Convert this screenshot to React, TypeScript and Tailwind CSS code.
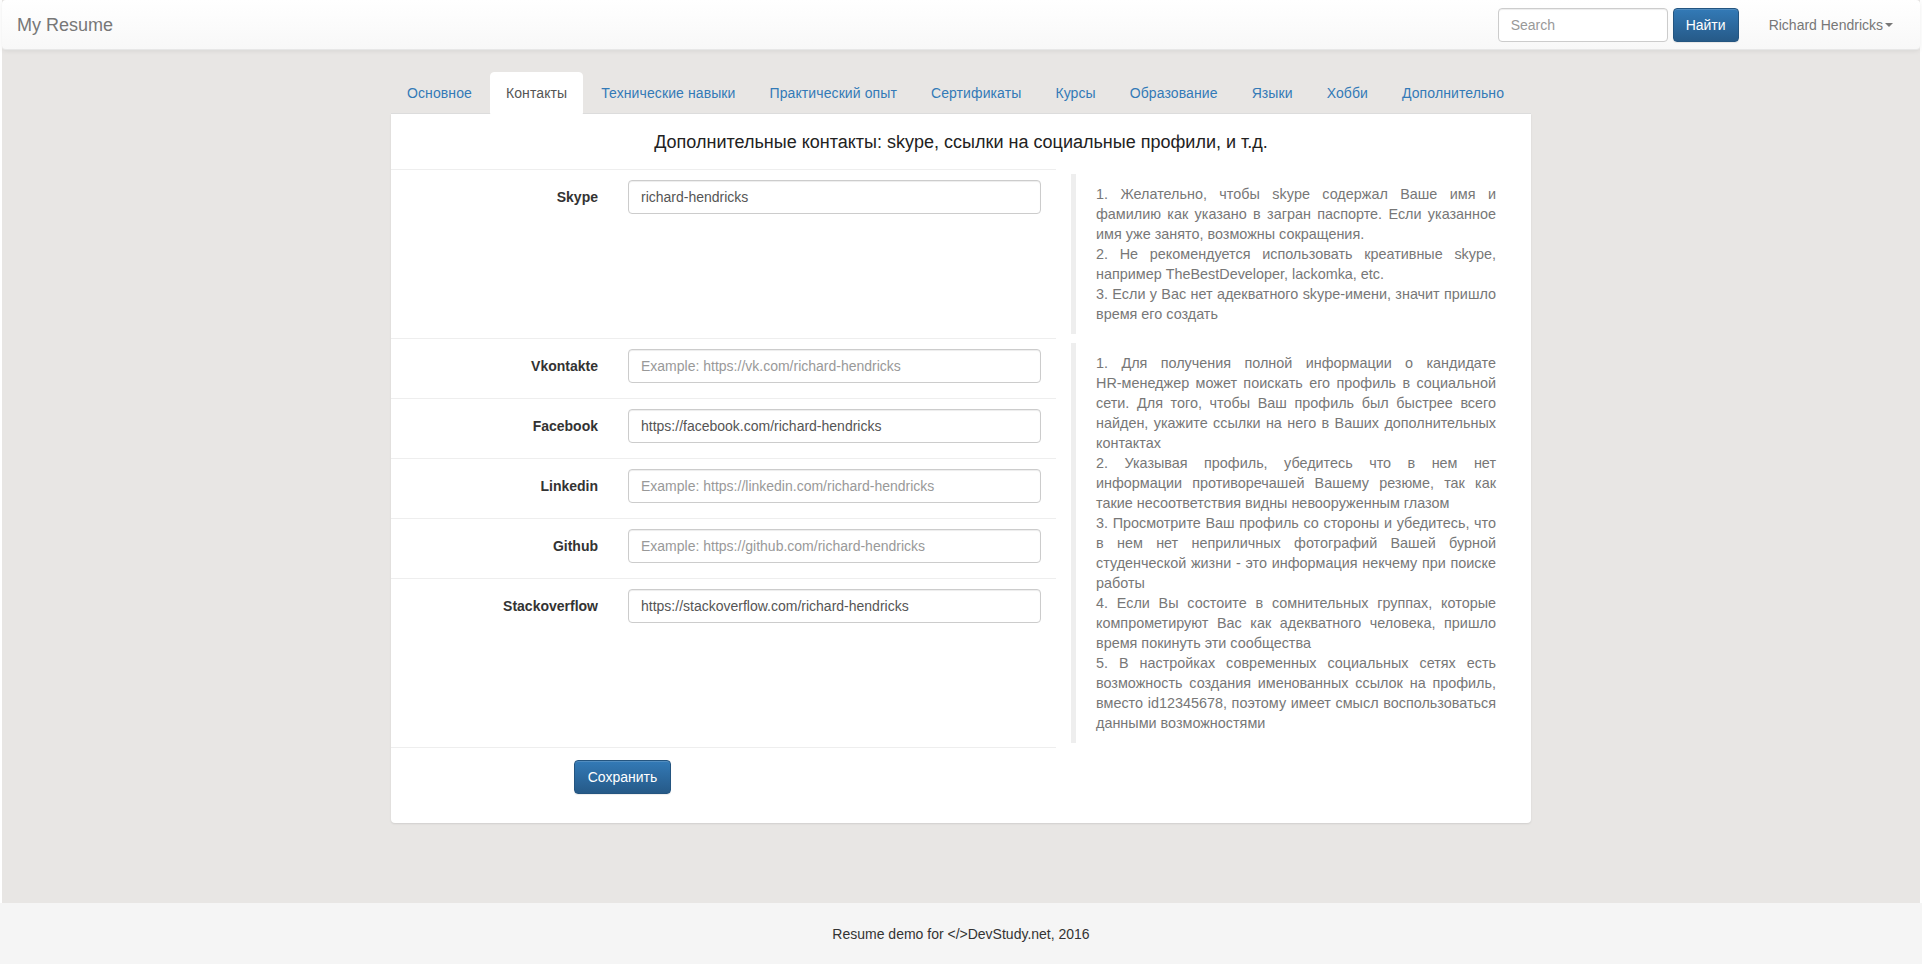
import React from 'react';

const tabs = [
  'Основное',
  'Контакты',
  'Технические навыки',
  'Практический опыт',
  'Сертификаты',
  'Курсы',
  'Образование',
  'Языки',
  'Хобби',
  'Дополнительно',
];

const socials = [
  { label: 'Vkontakte', value: '', placeholder: 'Example: https://vk.com/richard-hendricks' },
  { label: 'Facebook', value: 'https://facebook.com/richard-hendricks', placeholder: '' },
  { label: 'Linkedin', value: '', placeholder: 'Example: https://linkedin.com/richard-hendricks' },
  { label: 'Github', value: '', placeholder: 'Example: https://github.com/richard-hendricks' },
  { label: 'Stackoverflow', value: 'https://stackoverflow.com/richard-hendricks', placeholder: '' },
];

const skypeHelp = [
  '1. Желательно, чтобы skype содержал Ваше имя и фамилию как указано в загран паспорте. Если указанное имя уже занято, возможны сокращения.',
  '2. Не рекомендуется использовать креативные skype, например TheBestDeveloper, lackomka, etc.',
  '3. Если у Вас нет адекватного skype-имени, значит пришло время его создать',
];

const socialHelp = [
  '1. Для получения полной информации о кандидате HR\u2011менеджер может поискать его профиль в социальной сети. Для того, чтобы Ваш профиль был быстрее всего найден, укажите ссылки на него в Ваших дополнительных контактах',
  '2. Указывая профиль, убедитесь что в нем нет информации противоречашей Вашему резюме, так как такие несоответствия видны невооруженным глазом',
  '3. Просмотрите Ваш профиль со стороны и убедитесь, что в нем нет неприличных фотографий Вашей бурной студенческой жизни - это информация некчему при поиске работы',
  '4. Если Вы состоите в сомнительных группах, которые компрометируют Вас как адекватного человека, пришло время покинуть эти сообщества',
  '5. В настройках современных социальных сетях есть возможность создания именованных ссылок на профиль, вместо id12345678, поэтому имеет смысл воспользоваться данными возможностями',
];

const inputCls =
  'h-[34px] rounded-[4px] border border-[#ccc] bg-white px-[12px] text-[14px] text-[#555] shadow-[inset_0_1px_1px_rgba(0,0,0,0.075)] outline-none placeholder:text-[#999]';

const btnCls =
  'h-[34px] rounded-[4px] border border-[#245580] bg-linear-to-b from-[#337ab7] to-[#265a88] px-[12px] text-[14px] text-white shadow-[inset_0_1px_0_rgba(255,255,255,0.15),0_1px_1px_rgba(0,0,0,0.075)]';

function Field({ label, value, placeholder }: { label: string; value: string; placeholder: string }) {
  return (
    <div className="flex border-t border-[#eee] pt-[10px] pb-[15px]">
      <label className="flex h-[34px] w-[222px] shrink-0 items-center justify-end pr-[15px] font-bold text-[#333]">{label}</label>
      <div className="flex-1 px-[15px]">
        <input className={`${inputCls} w-full`} defaultValue={value} placeholder={placeholder} />
      </div>
    </div>
  );
}

function Help({ items }: { items: string[] }) {
  return (
    <div className="flex-1 px-[15px] pt-[5px] pb-[4px]">
      <blockquote className="border-l-[5px] border-[#eee] px-[20px] py-[10px] text-justify text-[14.4px] leading-[20px] text-[#777]">
        {items.map((t, i) => (
          <React.Fragment key={i}>
            {t}
            {i < items.length - 1 && <br />}
          </React.Fragment>
        ))}
      </blockquote>
    </div>
  );
}

export default function App() {
  return (
    <div className="flex min-h-screen flex-col bg-white font-['Liberation_Sans',Arial,sans-serif] text-[14px] leading-[20px] text-[#333]">
      <div className="mx-[2px] flex flex-1 flex-col bg-[#e8e6e4]">
        <nav className="flex h-[50px] items-center justify-between rounded-[4px] border-b border-[#e7e7e7] bg-linear-to-b from-white to-[#f8f8f8] pr-[12px] pl-[15px] shadow-[0_1px_5px_rgba(0,0,0,0.075)]">
          <span className="text-[18px] text-[#777]">My Resume</span>
          <div className="flex items-center">
            <input className={`${inputCls} w-[170px] shrink-0`} placeholder="Search" />
            <button className={`${btnCls} ml-[5px] w-[66px] shrink-0`}>Найти</button>
            <span className="ml-[15px] flex items-center whitespace-nowrap px-[15px] text-[#777]">
              Richard Hendricks
              <span className="ml-[2px] h-0 w-0 border-x-[4px] border-t-[4px] border-x-transparent border-t-[#777]" />
            </span>
          </div>
        </nav>

        <main className="mx-auto mt-[22px] w-[1140px]">
          <ul className="flex border-b border-[#ddd] tracking-[0.1px]">
            {tabs.map((t) => (
              <li key={t} className="-mb-px mr-[2px]">
                <span
                  className={
                    t === 'Контакты'
                      ? 'block rounded-t-[4px] border border-white bg-white px-[15px] py-[10px] text-[#555]'
                      : 'block rounded-t-[4px] border border-transparent px-[15px] py-[10px] text-[#337ab7]'
                  }
                >
                  {t}
                </span>
              </li>
            ))}
          </ul>

          <div className="rounded-b-[4px] bg-white pb-[29px] shadow-[0_1px_2px_rgba(0,0,0,0.1)]">
            <div className="flex h-[55px] items-center justify-center text-[18px] text-[#222]">
              Дополнительные контакты: skype, ссылки на социальные профили, и т.д.
            </div>

            <div className="flex">
              <div className="w-[665px]">
                <Field label="Skype" value="richard-hendricks" placeholder="" />
              </div>
              <Help items={skypeHelp} />
            </div>

            <div className="flex">
              <div className="flex w-[665px] flex-col">
                {socials.map((s) => (
                  <Field key={s.label} {...s} />
                ))}
              </div>
              <Help items={socialHelp} />
            </div>

            <div className="w-[665px] border-t border-[#eee] pt-[12px]">
              <button className={`${btnCls} ml-[183px] w-[97px]`}>Сохранить</button>
            </div>
          </div>
        </main>
      </div>

      <footer className="flex h-[61px] items-center justify-center bg-[#f5f5f5] text-[#333]">
        Resume demo for &lt;/&gt;DevStudy.net, 2016
      </footer>
    </div>
  );
}
